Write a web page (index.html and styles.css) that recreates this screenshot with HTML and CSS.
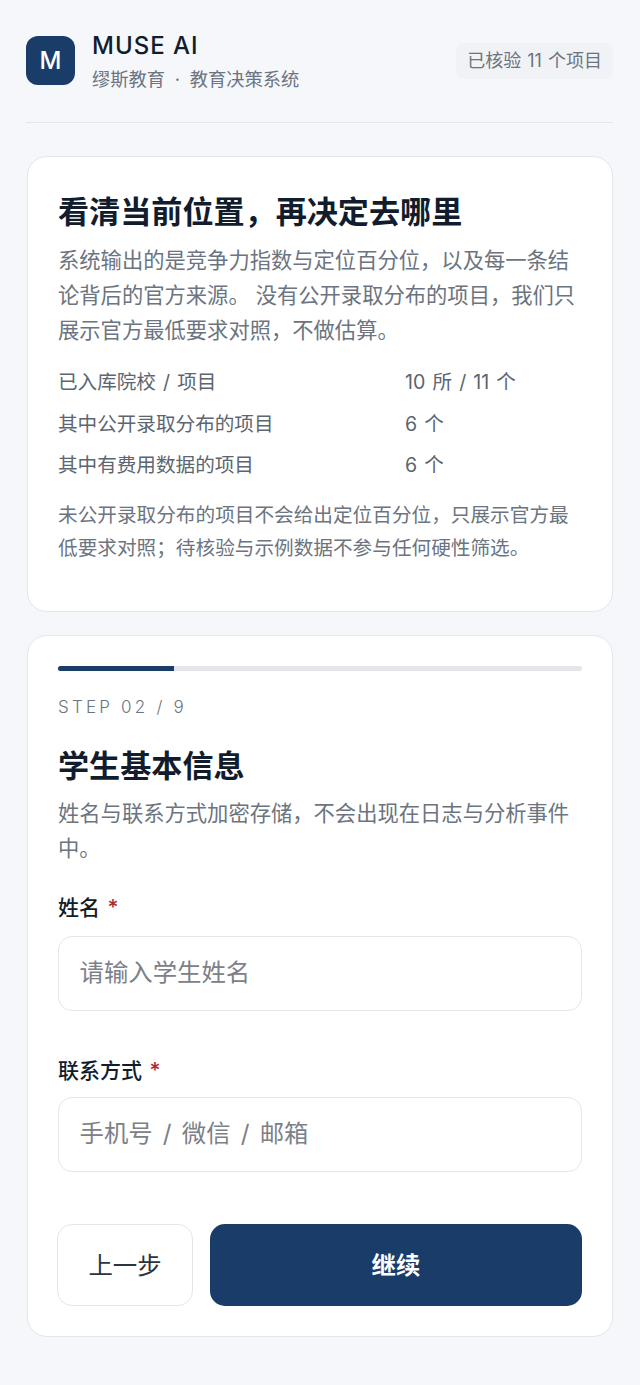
FILE: index.html
```html
<!DOCTYPE html>
<html lang="zh-CN">
<head>
<meta charset="utf-8">
<title>MUSE AI</title>
<link rel="stylesheet" href="styles.css">
</head>
<body>
<div class="page">
  <header class="top">
    <div class="brand">
      <div class="logo">M</div>
      <div class="brand-text">
        <div class="brand-name">MUSE AI</div>
        <div class="brand-sub">缪斯教育 · 教育决策系统</div>
      </div>
    </div>
    <div class="badge">已核验 11 个项目</div>
  </header>
  <section class="card intro">
    <h1 class="title">看清当前位置，再决定去哪里</h1>
    <p class="lead">系统输出的是竞争力指数与定位百分位，以及每一条结论背后的官方来源。 没有公开录取分布的项目，我们只展示官方最低要求对照，不做估算。</p>
    <div class="stats">
      <div class="stat"><span>已入库院校 / 项目</span><span>10 所 / 11 个</span></div>
      <div class="stat"><span>其中公开录取分布的项目</span><span>6 个</span></div>
      <div class="stat"><span>其中有费用数据的项目</span><span>6 个</span></div>
    </div>
    <p class="note">未公开录取分布的项目不会给出定位百分位，只展示官方最低要求对照；待核验与示例数据不参与任何硬性筛选。</p>
  </section>
  <section class="card form">
    <div class="progress"><div class="progress-fill"></div></div>
    <div class="step">STEP 02 / 9</div>
    <h2 class="title">学生基本信息</h2>
    <p class="lead">姓名与联系方式加密存储，不会出现在日志与分析事件中。</p>
    <div class="field">
      <label class="label">姓名 <span class="req">*</span></label>
      <input class="input" placeholder="请输入学生姓名">
    </div>
    <div class="field">
      <label class="label">联系方式 <span class="req">*</span></label>
      <input class="input" placeholder="手机号 / 微信 / 邮箱">
    </div>
    <div class="actions">
      <button class="btn btn-back">上一步</button>
      <button class="btn btn-next">继续</button>
    </div>
  </section>
</div>
</body>
</html>
```
FILE: styles.css
```css
* { box-sizing: border-box; }
html, body { margin: 0; padding: 0; }
body {
  background: #f5f7fb;
  color: #111c2d;
  font-family: Inter, "Noto Sans CJK SC", sans-serif;
  height: 1385px;
  overflow: hidden;
}
.page { padding: 30px 27px 0 26px; }
.top {
  display: flex;
  justify-content: space-between;
  align-items: center;
  height: 93px;
  padding-bottom: 31px;
  border-bottom: 1.5px solid #e3e6eb;
  margin-bottom: 33px;
}
.brand { display: flex; align-items: center; gap: 17px; }
.logo {
  width: 49px;
  height: 49px;
  border-radius: 12px;
  background: #1a3c69;
  color: #fff;
  display: flex;
  align-items: center;
  justify-content: center;
  font-size: 24px;
  font-weight: 500;
}
.brand-name { font-size: 24px; line-height: 30px; font-weight: 500; letter-spacing: 1px; }
.brand-sub { font-size: 18.3px; line-height: 24px; margin-top: 6px; color: #6b7480; word-spacing: 4.5px; }
.badge {
  background: #f0f2f5;
  border-radius: 8px;
  padding: 6px 11px;
  font-size: 18px;
  line-height: 24px;
  color: #6b7480;
  word-spacing: 1px;
}
.card {
  background: #fff;
  border: 1.5px solid #e3e6eb;
  border-radius: 20px;
  margin-left: 1px;
  padding: 30px;
}
.intro { height: 456px; margin-bottom: 23px; }
.form { height: 702px; }
.title { font-size: 31.1px; line-height: 40px; font-weight: 600; margin: 5px 0 0; color: #111c2d; }
.lead { font-size: 21.3px; line-height: 34.8px; color: #6b7480; margin: 11px 0 0; }
.stats { margin-top: 15px; }
.stat { display: grid; grid-template-columns: 347px 1fr; font-size: 19.6px; line-height: 41.5px; color: #5c6570; word-spacing: 1.6px; }
.note { font-size: 19.65px; line-height: 33px; color: #6b7480; margin: 12px 0 0; }
.progress { height: 5px; background: #e4e6ec; border-radius: 3px; }
.progress-fill { width: 22.2%; height: 100%; background: #1a3c69; border-radius: 3px 0 0 3px; }
.step { font-size: 17px; line-height: 22px; margin-top: 25px; letter-spacing: 3.2px; color: #6b7480; font-weight: 300; }
h2.title { margin-top: 28px; }
.form .lead { margin-top: 10px; }
.field { margin-top: 27px; }
.field + .field { margin-top: 45px; }
.field + .field .input { margin-top: 11px; }
.label { display: block; font-size: 21px; line-height: 30px; font-weight: 500; color: #111c2d; }
.req { color: #b3262e; margin-left: 2px; }
.input {
  display: block;
  width: 100%;
  height: 75px;
  margin-top: 13px;
  padding: 0 20.5px 2px;
  border: 1.5px solid #e3e6eb;
  border-radius: 14px;
  background: #fff;
  font: inherit;
  font-size: 24.4px;
  word-spacing: 3.3px;
  color: #111c2d;
  outline: none;
}
.input::placeholder { color: #7c8087; opacity: 1; }
.actions { display: flex; gap: 17px; margin-top: 52px; }
.btn { height: 82px; padding: 0 0 3px; border-radius: 15px; font: inherit; font-size: 24.4px; }
.btn-back { width: 136px; margin-left: -1px; background: #fff; border: 1.5px solid #e3e6eb; color: #2b3440; }
.btn-next { flex: 1; background: #1a3c69; border: none; color: #fff; font-weight: 600; }
```
